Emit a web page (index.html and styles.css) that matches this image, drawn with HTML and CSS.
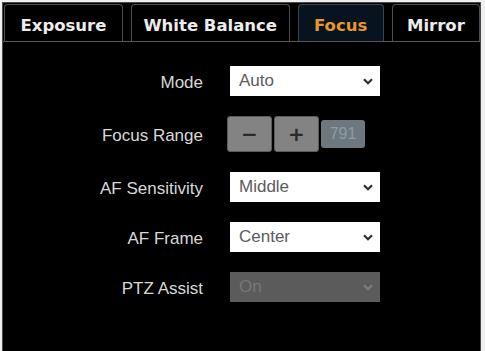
FILE: index.html
```html
<!DOCTYPE html>
<html lang="en">
<head>
    <meta charset="UTF-8">
    <meta name="viewport" content="width=device-width, initial-scale=1.0">
    <title>Focus</title>
    <link rel="stylesheet" href="styles.css">
</head>
<body>
    <div class="panel">
        <div class="tab-bar">
            <div class="tab tab-exposure">Exposure</div>
            <div class="tab tab-wb">White Balance</div>
            <div class="tab tab-focus active">Focus</div>
            <div class="tab tab-mirror">Mirror</div>
        </div>
        <div class="settings">
            <label class="field-label">Mode</label>
            <div class="select">
                <span>Auto</span>
                <svg class="chevron" width="10" height="7" viewBox="0 0 10 7"><path d="M1 1.2 L5 5.2 L9 1.2" fill="none" stroke="currentColor" stroke-width="2.2"/></svg>
            </div>

            <label class="field-label">Focus Range</label>
            <div class="range-group">
                <button class="step-button">&minus;</button>
                <button class="step-button">+</button>
                <span class="range-value">791</span>
            </div>

            <label class="field-label">AF Sensitivity</label>
            <div class="select">
                <span>Middle</span>
                <svg class="chevron" width="10" height="7" viewBox="0 0 10 7"><path d="M1 1.2 L5 5.2 L9 1.2" fill="none" stroke="currentColor" stroke-width="2.2"/></svg>
            </div>

            <label class="field-label">AF Frame</label>
            <div class="select">
                <span>Center</span>
                <svg class="chevron" width="10" height="7" viewBox="0 0 10 7"><path d="M1 1.2 L5 5.2 L9 1.2" fill="none" stroke="currentColor" stroke-width="2.2"/></svg>
            </div>

            <label class="field-label">PTZ Assist</label>
            <div class="select disabled">
                <span>On</span>
                <svg class="chevron" width="10" height="7" viewBox="0 0 10 7"><path d="M1 1.2 L5 5.2 L9 1.2" fill="none" stroke="currentColor" stroke-width="2.2"/></svg>
            </div>
        </div>
    </div>
</body>
</html>
```

FILE: styles.css
```css
/* Page */
body {
    margin: 0;
    background-color: #efefef;
    overflow: hidden;
}

/* Black settings panel */
.panel {
    margin: 2px 0 0 2px;
    width: 477px;
    height: 360px;
    background-color: #000;
    border: 1px solid #4a4a4a;
    font-family: "Liberation Sans", Arial, sans-serif;
}

/* Tabs */
.tab-bar {
    display: flex;
    gap: 8px;
    padding: 1px 0 0 1px;
    border-bottom: 1px solid #555;
}

.tab {
    height: 37px;
    box-sizing: border-box;
    padding-top: 4px;
    display: flex;
    align-items: center;
    justify-content: center;
    border: 1px solid #4d4d4d;
    border-bottom: none;
    border-radius: 4px 4px 0 0;
    color: #ececec;
    font-family: "DejaVu Sans", Verdana, sans-serif;
    font-weight: bold;
    font-size: 16.5px;
}

.tab-exposure { width: 120px; }
.tab-wb { width: 160px; }
.tab-focus { width: 87px; }
.tab-mirror { width: 89px; }

.tab.active {
    background-color: #07131f;
    color: #e8962e;
    border-color: #3a4550;
}

/* Settings form */
.settings {
    display: grid;
    grid-template-columns: 200px 150px;
    column-gap: 27px;
    row-gap: 20px;
    align-items: center;
    padding-top: 24px;
}

.field-label {
    padding-top: 3px;
    text-align: right;
    color: #d8d8d8;
    font-size: 17px;
}

.select {
    height: 30px;
    box-sizing: border-box;
    display: flex;
    align-items: center;
    justify-content: space-between;
    padding: 0 7px 0 9px;
    background-color: #fff;
    color: #5c5c5c;
    font-size: 17px;
}

.select .chevron {
    color: #2e2e2e;
}

.select.disabled {
    background-color: #5b5b5b;
    color: #777;
}

.select.disabled .chevron {
    color: #7c7c7c;
}

/* Focus range stepper */
.range-group {
    display: flex;
    align-items: center;
    gap: 2px;
    margin-left: -3px;
}

.step-button {
    width: 45px;
    height: 36px;
    padding: 0;
    background-color: #838383;
    border: 1px solid #5c5c5c;
    border-radius: 3px;
    color: #2a2a2a;
    font-family: "DejaVu Sans", sans-serif;
    font-weight: bold;
    font-size: 20px;
    line-height: 1;
}

.range-value {
    width: 44px;
    height: 28px;
    display: flex;
    align-items: center;
    justify-content: center;
    background-color: #6d787e;
    border-radius: 3px;
    color: #8d9ca6;
    font-size: 16px;
}
```
